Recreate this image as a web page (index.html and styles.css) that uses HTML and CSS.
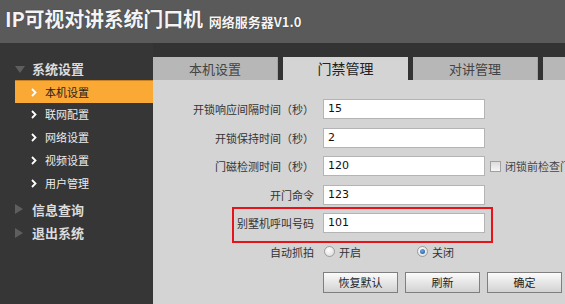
FILE: index.html
```html
<!DOCTYPE html>
<html>
<head>
<meta charset="utf-8">
<link rel="stylesheet" href="styles.css">
</head>
<body>
<div class="header">
  <span class="title">IP可视对讲系统门口机</span>
  <span class="sub">网络服务器V1.0</span>
</div>
<div class="main">
  <aside class="side">
    <div class="group"><span class="tri down"></span>系统设置</div>
    <ul class="items">
      <li class="active"><svg class="chev" width="6" height="9" viewBox="0 0 6 9"><polyline points="1,1 4.5,4.5 1,8" fill="none" stroke="#fff" stroke-width="1.8"/></svg>本机设置</li>
      <li><svg class="chev" width="6" height="9" viewBox="0 0 6 9"><polyline points="1,1 4.5,4.5 1,8" fill="none" stroke="#fff" stroke-width="1.8"/></svg>联网配置</li>
      <li><svg class="chev" width="6" height="9" viewBox="0 0 6 9"><polyline points="1,1 4.5,4.5 1,8" fill="none" stroke="#fff" stroke-width="1.8"/></svg>网络设置</li>
      <li><svg class="chev" width="6" height="9" viewBox="0 0 6 9"><polyline points="1,1 4.5,4.5 1,8" fill="none" stroke="#fff" stroke-width="1.8"/></svg>视频设置</li>
      <li><svg class="chev" width="6" height="9" viewBox="0 0 6 9"><polyline points="1,1 4.5,4.5 1,8" fill="none" stroke="#fff" stroke-width="1.8"/></svg>用户管理</li>
    </ul>
    <div class="group gap"><span class="tri right"></span>信息查询</div>
    <div class="group"><span class="tri right"></span>退出系统</div>
  </aside>
  <section class="panel">
    <div class="tabs">
      <div class="tab">本机设置</div>
      <div class="tab active">门禁管理</div>
      <div class="tab">对讲管理</div>
      <div class="tab"></div>
    </div>
    <div class="content">
      <div class="row"><span class="lbl">开锁响应间隔时间（秒）</span><div class="input">15</div></div>
      <div class="row"><span class="lbl">开锁保持时间（秒）</span><div class="input">2</div></div>
      <div class="row"><span class="lbl">门磁检测时间（秒）</span><div class="input">120</div><span class="check"></span><span class="checktext">闭锁前检查门</span></div>
      <div class="row"><span class="lbl">开门命令</span><div class="input">123</div></div>
      <div class="row marked"><span class="lbl">别墅机呼叫号码</span><div class="input">101</div></div>
      <div class="row radios"><span class="lbl">自动抓拍</span>
        <span class="opt first"><span class="radio"></span>开启</span>
        <span class="opt"><span class="radio on"></span>关闭</span>
      </div>
      <div class="buttons">
        <button class="btn">恢复默认</button>
        <button class="btn">刷新</button>
        <button class="btn">确定</button>
      </div>
    </div>
  </section>
</div>
</body>
</html>
```

FILE: styles.css
```css
* { box-sizing: border-box; }
body {
  margin: 0;
  width: 565px;
  height: 304px;
  overflow: hidden;
  background: #d4d4d4;
  font-family: "Noto Sans CJK SC", sans-serif;
}
.header {
  height: 43px;
  background: #5a5a5a;
  display: flex;
  align-items: baseline;
  padding: 6px 0 0 5px;
  color: #f4f4f4;
  white-space: nowrap;
}
.title {
  font-size: 20px;
  line-height: 26px;
  font-weight: bold;
  letter-spacing: -0.2px;
  text-shadow: 0 0 1px #222;
}
.sub {
  font-size: 13px;
  font-weight: bold;
  margin-left: 6px;
  text-shadow: 0 0 1px #222;
}
.main {
  display: flex;
  height: 261px;
}
.side {
  width: 153px;
  flex: none;
  background: #363636;
  padding-top: 14px;
}
.group {
  height: 23px;
  display: flex;
  align-items: center;
  padding-left: 15px;
  color: #dcdcdc;
  font-size: 13px;
  font-weight: bold;
  line-height: 23px;
}
.group.gap { margin-top: 2px; height: 24px; }
.tri { display: inline-block; width: 0; height: 0; }
.tri.down {
  border-left: 5px solid transparent;
  border-right: 5px solid transparent;
  border-top: 7px solid #5e5e5e;
  margin-right: 7px;
  margin-top: 2px;
}
.tri.right {
  border-top: 5px solid transparent;
  border-bottom: 5px solid transparent;
  border-left: 8px solid #5e5e5e;
  margin-right: 9px;
}
.items {
  list-style: none;
  margin: 0;
  padding: 0;
}
.items li {
  height: 23px;
  margin-left: 15px;
  padding-left: 16px;
  display: flex;
  align-items: center;
  color: #ececec;
  font-size: 11px;
  line-height: 23px;
}
.items li.active {
  background: #fba935;
  border-top: 1px solid #c98220;
  color: #1e1e1e;
}
.chev { margin-right: 8px; flex: none; }
.panel {
  flex: 1;
  display: flex;
  flex-direction: column;
  overflow: hidden;
  background: #d4d4d4;
}
.tabs {
  height: 37px;
  flex: none;
  background: #333;
  padding-top: 14px;
  display: flex;
  gap: 5px;
}
.tab {
  flex: none;
  width: 125px;
  height: 23px;
  background: #b7b7b7;
  border-right: 1px solid #a4a4a4;
  color: #444;
  font-size: 13px;
  line-height: 23px;
  text-align: center;
}
.tab.active {
  background: #d4d4d4;
  border-right: none;
  color: #222;
  font-size: 14px;
}
.content {
  padding-top: 19px;
}
.row {
  display: flex;
  align-items: center;
  height: 20px;
  margin-bottom: 8.5px;
  position: relative;
  font-size: 11px;
  color: #333;
}
.lbl {
  width: 161px;
  flex: none;
  text-align: right;
  line-height: 20px;
  white-space: nowrap;
}
.input {
  width: 162px;
  height: 20px;
  margin-left: 9px;
  flex: none;
  background: #fff;
  border: 1px solid #b4b4b4;
  padding-left: 4px;
  font-family: "DejaVu Sans", sans-serif;
  font-size: 11px;
  line-height: 18px;
  color: #111;
}
.check {
  width: 11px;
  height: 11px;
  margin-left: 5px;
  flex: none;
  border: 1px solid #a0a0a0;
  background: linear-gradient(#dcdcdc, #f6f6f6);
}
.checktext {
  margin-left: 4px;
  color: #444;
  white-space: nowrap;
  line-height: 20px;
}
.marked::after {
  content: "";
  position: absolute;
  left: 79px;
  top: -6px;
  width: 257px;
  height: 32px;
  border: 2px solid #e5141b;
}
.row.radios {
  margin-top: 0.5px;
  margin-bottom: 10px;
}
.opt {
  display: flex;
  align-items: center;
  width: 93px;
  flex: none;
  line-height: 20px;
}
.opt.first { margin-left: 10px; }
.radio {
  width: 11px;
  height: 11px;
  border-radius: 50%;
  border: 1px solid #9c9c9c;
  background: radial-gradient(circle at 40% 35%, #fff, #d6d6d6);
  margin-right: 4px;
  flex: none;
  position: relative;
}
.radio.on::after {
  content: "";
  position: absolute;
  left: 2px;
  top: 2px;
  width: 5px;
  height: 5px;
  border-radius: 50%;
  background: radial-gradient(circle at 40% 35%, #6fa8e0, #1b4f95);
}
.buttons {
  display: flex;
  gap: 7px;
  margin-left: 170px;
}
.btn {
  width: 75px;
  height: 21px;
  padding: 0;
  border: 1px solid #7f7f7f;
  background: linear-gradient(#fbfbfb, #e6e6e6 50%, #d2d2d2);
  font-family: "Noto Sans CJK SC", sans-serif;
  font-size: 11px;
  line-height: 19px;
  color: #222;
}
```
